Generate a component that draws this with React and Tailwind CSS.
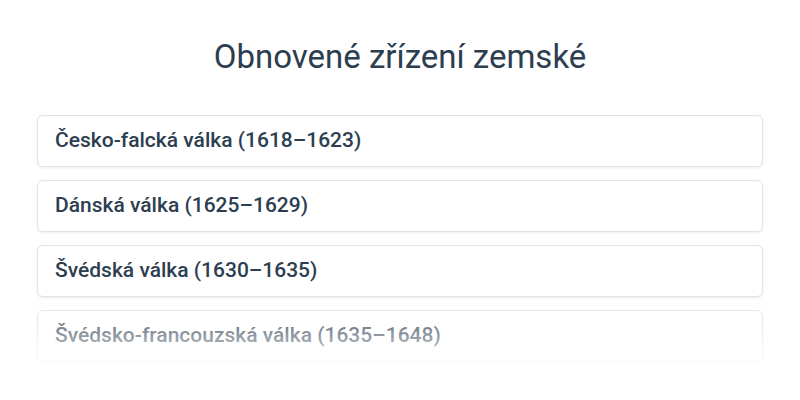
import React from 'react';

// Lista de guerras do período, a última desaparece num degradê.
const valky = [
  'Česko-falcká válka (1618–1623)',
  'Dánská válka (1625–1629)',
  'Švédská válka (1630–1635)',
  'Švédsko-francouzská válka (1635–1648)',
];

export default function App() {
  return (
    <div className="min-h-screen bg-white text-[#2c3e50]" style={{ fontFamily: 'Roboto, "Noto Sans", sans-serif' }}>
      <div className="w-[728px] mx-auto pt-[37px]">
        <h1 className="text-center text-[33px] leading-[40px] font-normal">Obnovené zřízení zemské</h1>

        <div className="relative mt-[37px] h-[262px] overflow-hidden">
          <div className="flex flex-col gap-[13px] pt-px px-px">
            {valky.map((v, i) => (
              <div
                key={i}
                className="h-[52px] flex items-center px-[17px] bg-white border border-[#e3e3e3] rounded-[6px] shadow-[0_1px_3px_rgba(0,0,0,0.08)] text-[21px] font-medium"
              >
                {v}
              </div>
            ))}
          </div>
          <div className="absolute left-0 right-0 top-[185px] bottom-0 bg-gradient-to-b from-white/0 to-white pointer-events-none" />
        </div>
      </div>
    </div>
  );
}
